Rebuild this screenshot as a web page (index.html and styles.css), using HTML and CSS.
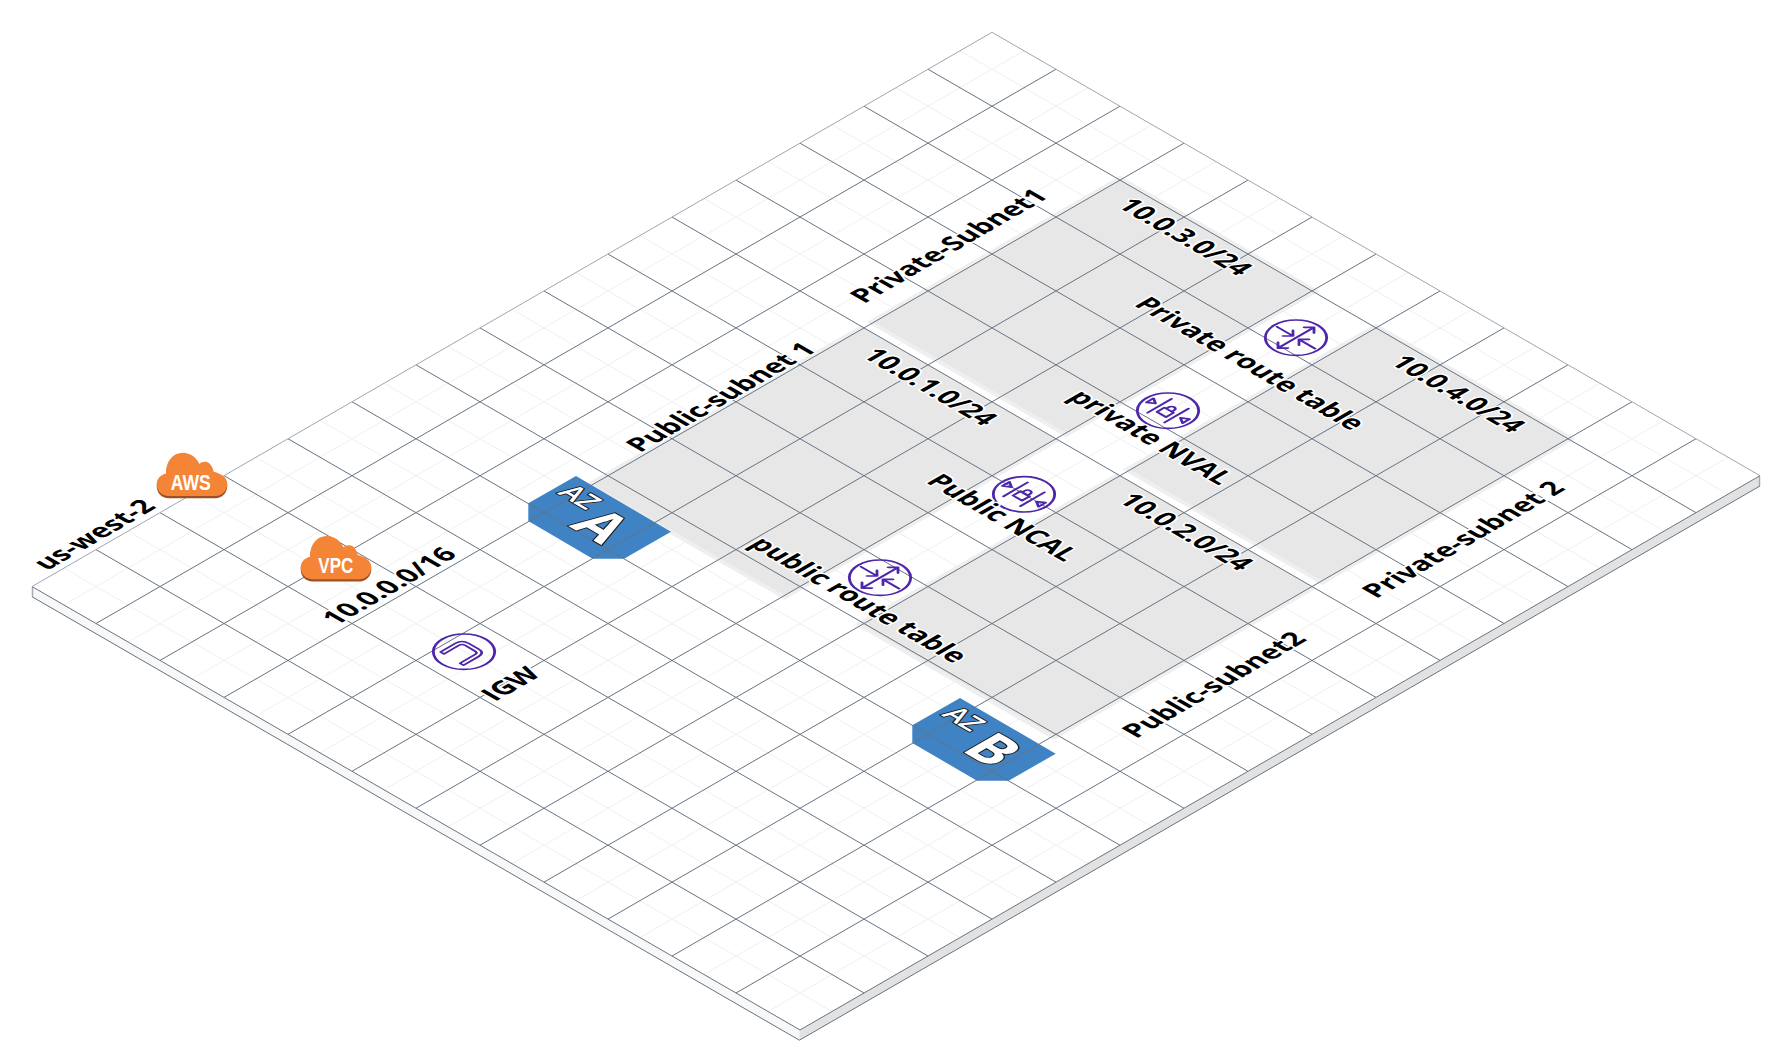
FILE: index.html
```html
<!DOCTYPE html>
<html lang="en">
<head>
<meta charset="utf-8">
<title>AWS VPC isometric diagram</title>
<link rel="stylesheet" href="styles.css">
</head>
<body>
<svg class="canvas" width="1792" height="1063" viewBox="0 0 1792 1063" xmlns="http://www.w3.org/2000/svg">
  <defs>
    <path id="cloud" d="M12 43.3C5 43.3 0 38 0 31C0 26 4 22 9.3 20.7C9 9 16 0 26 0C34 0 40 5 42.7 11.3C45 9 50 8 53 11C55 13 56.5 16 57 19C65 21 70.6 25 70.6 31C70.6 38 65 43.3 59 43.3Z"/>
    <g id="router">
      <circle class="ico" r="21.7"/>
      <path class="ico" d="M0 -18V18M-5 -13L0 -18L5 -13M-5 13L0 18L5 13M-19 0H-3M-8 -5L-3 0L-8 5M19 0H3M8 -5L3 0L8 5"/>
    </g>
    <g id="gateway">
      <circle class="ico" r="21.7"/>
      <path class="ico" d="M-8.5 -12V12M8.5 -12V12M-4.5 -1H4.5V6.5H-4.5ZM-2.7 -1V-3.5A2.7 2.7 0 0 1 2.7 -3.5V-1"/>
      <path class="ico" d="M-18 -3.5L-12.5 0L-18 3.5ZM18 -3.5L12.5 0L18 3.5Z"/>
    </g>
    <g id="igw">
      <circle class="ico" r="21.7"/>
      <path class="ico-thin" d="M-11.5 12V-3Q-11.5 -9.5 -5 -9.5H5Q11.5 -9.5 11.5 -3V12H8V-3Q8 -6 5 -6H-5Q-8 -6 -8 -3V12Z"/>
    </g>
  </defs>

  <polygon class="side-left" points="32,586.7 799.4,1030.2 799.4,1040.2 32,596.7"/>
  <polygon class="side-right" points="799.4,1030.2 1760,476 1760,486 799.4,1040.2"/>
  <path class="side-tick" d="M32.5 586.7V596.7M1759.5 476V486"/>

  <g transform="matrix(64 36.95 -64 36.95 992 32.3)">
    <rect class="top-face" width="12" height="15"/>
    <path class="minor" d="M0 .5H12M0 1.5H12M0 2.5H12M0 3.5H12M0 4.5H12M0 5.5H12M0 6.5H12M0 7.5H12M0 8.5H12M0 9.5H12M0 10.5H12M0 11.5H12M0 12.5H12M0 13.5H12M0 14.5H12M.5 0V15M1.5 0V15M2.5 0V15M3.5 0V15M4.5 0V15M5.5 0V15M6.5 0V15M7.5 0V15M8.5 0V15M9.5 0V15M10.5 0V15M11.5 0V15"/>
    <rect class="zone-edge" x="2.94" y=".94" width="3.12" height="3.96"/>
    <rect class="zone-edge" x="6.94" y=".94" width="3.12" height="3.96"/>
    <rect class="zone-edge" x="2.94" y="5" width="3.12" height="4.3"/>
    <rect class="zone-edge" x="6.94" y="5" width="3.12" height="4.09"/>
    <rect class="zone" x="3" y="1" width="3" height="3.84"/>
    <rect class="zone" x="7" y="1" width="3" height="3.84"/>
    <rect class="zone" x="3" y="5" width="3" height="4.24"/>
    <rect class="zone" x="7" y="5" width="3" height="4.03"/>
  </g>

  <polygon class="az" points="576,476 671,531.7 624,558.7 592.7,558.7 528.3,521 528.3,503.3"/>
  <polygon class="az" points="960,698 1055.7,753.7 1008.7,780.7 977,780.7 912.3,743 912.3,725.3"/>

  <g transform="matrix(64 36.95 -64 36.95 992 32.3)">
    <path class="major" d="M0 1H12M0 2H12M0 3H12M0 4H12M0 5H12M0 6H12M0 7H12M0 8H12M0 9H12M0 10H12M0 11H12M0 12H12M0 13H12M0 14H12M1 0V15M2 0V15M3 0V15M4 0V15M5 0V15M6 0V15M7 0V15M8 0V15M9 0V15M10 0V15M11 0V15M0 15H12V0"/>
    <path class="edge" d="M0 15V0H12"/>
  </g>
  <path class="major-plain" d="M32 596.7L799.4 1040.2L1760 486"/>

  <g transform="translate(156.7 452.7)">
    <use href="#cloud" class="cloud-rim" y="2.3"/>
    <use href="#cloud" class="cloud"/>
    <text class="cloud-text" x="14" y="37.4" textLength="40" lengthAdjust="spacingAndGlyphs">AWS</text>
  </g>
  <g transform="translate(300.7 536)">
    <use href="#cloud" class="cloud-rim" y="2.3"/>
    <use href="#cloud" class="cloud"/>
    <text class="cloud-text" x="17.6" y="36.7" textLength="35" lengthAdjust="spacingAndGlyphs">VPC</text>
  </g>

  <use href="#igw" transform="matrix(1 .5773 -1 .5773 464 651.7)"/>
  <use href="#router" transform="matrix(1 .5773 -1 .5773 880 577.7)"/>
  <use href="#router" transform="matrix(1 .5773 -1 .5773 1296 337.7)"/>
  <use href="#gateway" transform="matrix(1 .5773 -1 .5773 1024 494.3)"/>
  <use href="#gateway" transform="matrix(1 .5773 -1 .5773 1168 410.7)"/>

  <text class="az-small" transform="matrix(1 .5773 -1 .5773 556.7 493.3)">AZ</text>
  <text class="az-big" transform="matrix(1 .5773 -1 .5773 568.3 526)">A</text>
  <text class="az-small" transform="matrix(1 .5773 -1 .5773 940.7 715)">AZ</text>
  <text class="az-big" transform="matrix(1 .5773 -1 .5773 960 750)">B</text>

  <text class="label" transform="matrix(1 -.5773 1 .5773 47 571)">us-west-2</text>
  <text class="label" transform="matrix(1 -.5773 1 .5773 336 626)">10.0.0.0/16</text>
  <text class="label" transform="matrix(1 -.5773 1 .5773 640 453)">Public-subnet 1</text>
  <text class="label" transform="matrix(1 -.5773 1 .5773 864 304)">Private-Subnet1</text>
  <text class="label" transform="matrix(1 -.5773 1 .5773 1376 599)">Private-subnet 2</text>
  <text class="label" transform="matrix(1 -.5773 1 .5773 1136 739)">Public-subnet2</text>
  <text class="label" transform="matrix(1 -.5773 1 .5773 495 702)">IGW</text>

  <text class="label" transform="matrix(1 .5773 -1 .5773 1116 206)">10.0.3.0/24</text>
  <text class="label" transform="matrix(1 .5773 -1 .5773 861 356)">10.0.1.0/24</text>
  <text class="label" transform="matrix(1 .5773 -1 .5773 1117 501)">10.0.2.0/24</text>
  <text class="label" transform="matrix(1 .5773 -1 .5773 1389 363)">10.0.4.0/24</text>
  <text class="label" transform="matrix(1 .5773 -1 .5773 1133 305)">Private route table</text>
  <text class="label" transform="matrix(1 .5773 -1 .5773 1067 398)">private NVAL</text>
  <text class="label" transform="matrix(1 .5773 -1 .5773 925 482)">Public NCAL</text>
  <text class="label" transform="matrix(1 .5773 -1 .5773 748 545)">public route table</text>
</svg>
</body>
</html>
```

FILE: styles.css
```css
html, body {
  margin: 0;
  background: #fff;
}

.canvas {
  display: block;
}

.top-face {
  fill: #fff;
}

.side-left {
  fill: #f8f8f8;
}

.side-right {
  fill: #e2e2e2;
}

.side-tick {
  fill: none;
  stroke: #a3abb4;
  stroke-width: 1.5;
}

.minor,
.major,
.edge {
  fill: none;
  vector-effect: non-scaling-stroke;
}

.minor {
  stroke: #f0f0f0;
  stroke-width: 1;
}

.major {
  stroke: #667382;
  stroke-width: 1;
}

.major-plain {
  fill: none;
  stroke: #667382;
  stroke-width: 1;
}

.edge {
  stroke: #a0a6ad;
  stroke-width: 1;
}

.zone {
  fill: #e7e7e7;
}

.zone-edge {
  fill: #efefef;
}

.az {
  fill: #3f83c4;
}

.cloud {
  fill: #f58536;
}

.cloud-rim {
  fill: #9d5025;
}

.cloud-text {
  font-family: "Liberation Sans", Arial, sans-serif;
  font-size: 22px;
  font-weight: 700;
  fill: #fff;
}

.ico,
.ico-thin {
  fill: none;
  stroke: #4d27aa;
  stroke-linecap: round;
  stroke-linejoin: round;
}

.ico {
  stroke-width: 2;
}

.ico-thin {
  stroke-width: 1.8;
}

.label {
  font-family: "Open Sans", "Noto Sans", sans-serif;
  font-size: 23.2px;
  font-weight: 700;
  fill: #000;
  stroke: #fff;
  stroke-width: 3px;
  stroke-linejoin: round;
  paint-order: stroke;
}

.az-small,
.az-big {
  font-family: "Open Sans", "Noto Sans", sans-serif;
  fill: #fff;
  stroke: #1a1a1a;
  stroke-linejoin: round;
  paint-order: stroke;
}

.az-small {
  font-size: 24px;
  font-weight: 600;
  stroke-width: 2px;
}

.az-big {
  font-size: 48px;
  font-weight: 700;
  stroke-width: 2px;
}
```
